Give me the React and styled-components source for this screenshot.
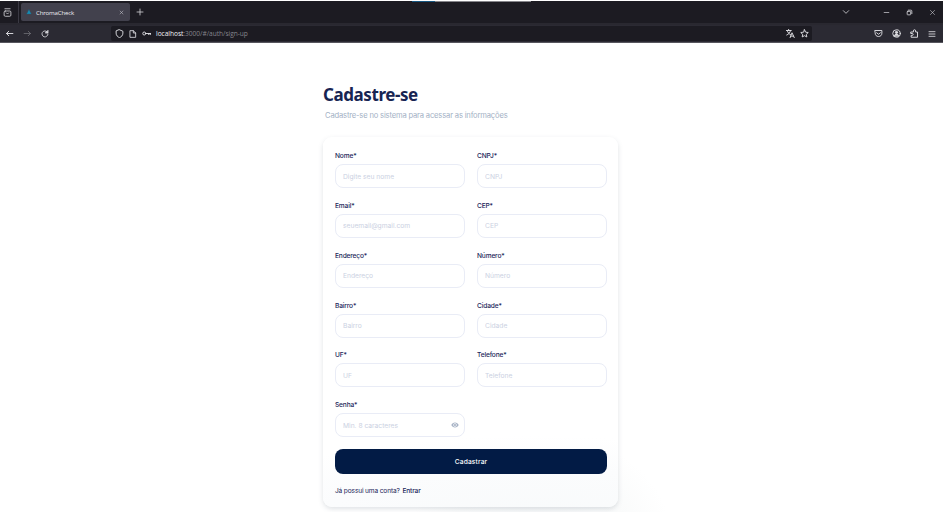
import React from "react";
import styled, { createGlobalStyle } from "styled-components";
import { MdRemoveRedEye } from "react-icons/md";

const Global = createGlobalStyle`
  * { box-sizing: border-box; }
  body { margin: 0; background: #fff; font-family: Inter, "Liberation Sans", sans-serif; overflow: hidden; }
  button, input { font-family: inherit; }
`;
const Window = styled.div`height: 515px; width: 943px; padding: 1px 0 3px; overflow: hidden; background: #fff; display: flex; flex-direction: column;`;
const TabBar = styled.div`height: 22px; flex: none; background: #1c1b22; display: flex; align-items: center; position: relative; color: #cfcfd4;`;
const Pinned = styled.div`width: 19px; height: 22px; padding-left: 3px; border-right: 1px solid #3a3943; display: flex; align-items: center;`;
const Tab = styled.div`width: 109px; height: 18px; margin-left: 2px; border-radius: 2px; background: #42414d; display: flex; align-items: center; padding: 0 6px 0 5px;`;
const TabTitle = styled.span`flex: 1; margin-left: 4px; font: 6.1px "Open Sans", sans-serif; letter-spacing: -0.16px; color: #ececf0;`;
const NewTab = styled.div`margin-left: 6px; display: flex;`;
const WindowControls = styled.div`margin-left: auto; display: flex; align-items: center; gap: 16px; padding-right: 7px;`;
const Buttons = styled.div`margin-left: 17px; display: flex; align-items: center; gap: 16px;`;
const LoadBar = styled.div`position: absolute; left: 412px; top: 0; width: 119px; height: 1px; background: linear-gradient(90deg, #175680 0 23px, #85858a 23px);`;
const Toolbar = styled.div`height: 20px; flex: none; background: #2b2a33; border-top: 2px solid #292830; border-bottom: 1px solid #57565e; display: flex; align-items: center; color: #dfdfe3;`;
const Navigation = styled.div`width: 111px; padding-left: 5px; display: flex; gap: 9px; align-items: center;`;
const Address = styled.div`width: 701px; height: 15px; padding: 0 3px 0 4px; border-radius: 2px; background: #1c1b22; display: flex; align-items: center; gap: 5px;`;
const Url = styled.span`flex: 1; font: 6.6px "Open Sans", sans-serif; letter-spacing: ${(p) => p.$spacing}px; color: #85858c; b { color: #f2f2f5; font-weight: 400; }`;
const Extensions = styled.div`margin-left: auto; padding-right: 7px; display: flex; gap: 9px; align-items: center;`;
const Glyph = styled.svg`width: ${(p) => p.$size || 10}px; height: ${(p) => p.$size || 10}px; flex: none; display: block; fill: none; stroke: currentColor; stroke-width: ${(p) => p.$weight || 1.5}; stroke-linecap: round; stroke-linejoin: round; opacity: ${(p) => p.$opacity || 1};`;

const Page = styled.main`flex: 1; min-height: 0; overflow: hidden; padding-left: 323px; background: radial-gradient(ellipse 130px 100px at 540px 490px, #f5f7f8 0%, #fafbfb 65%, #fff 100%) no-repeat;`;
const Heading = styled.h1`margin: 40px 0 0; height: 24px; font: 700 17px/24px "Noto Sans", "Open Sans", sans-serif; letter-spacing: ${(p) => p.$spacing}px; color: #172452; white-space: nowrap;`;
const Intro = styled.p`margin: 2px 0 0 2px; height: 12px; font-size: 7.6px; line-height: 13px; letter-spacing: ${(p) => p.$spacing}px; color: #a3b1c5; white-space: nowrap;`;
const Card = styled.form`width: 295px; height: 370px; margin-top: 16px; padding: 12px 12px 0; border-radius: 9px; background: radial-gradient(ellipse 330px 90px at 70% 105%, #f8fafb 0%, #fbfcfd 65%, #fff 100%); box-shadow: 0 2px 5px rgba(95, 110, 125, 0.2);`;
const Fields = styled.div`display: grid; grid-template-columns: 130px 130px; column-gap: 12px; grid-auto-rows: 49.85px;`;
const Field = styled.label`display: block;`;
const Label = styled.span`display: block; height: 15px; line-height: 15px; font-size: 6.6px; font-weight: 500; letter-spacing: ${(p) => p.$spacing}px; color: #1b2559; white-space: nowrap;`;
const InputBox = styled.span`display: flex; align-items: center; height: 24px; padding: 0 5px 0 7px; border: 1px solid #e9ecf6; border-radius: 8px; background: transparent; color: #a6b2c5;`;
const Input = styled.input`flex: 1; width: 0; padding: 1px 0 0; border: 0; outline: 0; background: transparent; font-size: 6.7px; letter-spacing: ${(p) => p.$spacing}px; &::placeholder { color: #cbd1e2; opacity: 1; }`;
const Submit = styled.button`display: block; width: 272px; height: 25px; margin-top: 0.9px; padding: 1px 0 0; border: 0; border-radius: 8px; background: #021b45; color: #fff; font-size: 6.7px; font-weight: 500; letter-spacing: 0.12px;`;
const Login = styled.p`margin: 12px 0 0; font-size: 6.6px; line-height: 11px; letter-spacing: ${(p) => p.$spacing}px; color: #1b2559; b { font-weight: 500; margin-left: 1px; }`;

const shapes = {
  archive: <><rect x="3" y="8" width="18" height="14" rx="3" /><path d="M5 2h14M9 13l3 3 3-3" /></>,
  close: <path d="M5 5l14 14M19 5L5 19" />,
  plus: <path d="M12 3v18M3 12h18" />,
  down: <path d="M4 8l8 8 8-8" />,
  minus: <path d="M4 12h16" />,
  restore: <><rect x="4" y="8" width="12" height="12" rx="2" /><path d="M8 4h9a3 3 0 013 3v9" /></>,
  back: <path d="M21 12H4M10 6l-6 6 6 6" />,
  forward: <path d="M3 12h17M14 6l6 6-6 6" />,
  reload: <><path d="M21 12a9 9 0 11-3-7" /><path d="M21 2v7h-7z" fill="currentColor" /></>,
  shield: <path d="M12 2l9 4v5c0 6-4 10-9 12-5-2-9-6-9-12V6z" />,
  page: <path d="M4 2h9l7 7v13H4zM13 2v7h7" />,
  key: <><circle cx="6" cy="12" r="4" /><path d="M10 12h13M18 12v3M22 12v3" /></>,
  translate: <path d="M1 4h13M7 1v3M3 4c2 6 5 9 9 11M12 4C11 10 7 14 2 16M11 23l5-13 6 13M13 19h7" />,
  star: <path d="M12 2l3 6.5 7 .9-5.2 4.8 1.4 7L12 17.8l-6.2 3.4 1.4-7L2 9.4l7-.9z" />,
  pocket: <><path d="M3 4h18v7c0 6-4 9-9 9s-9-3-9-9z" /><path d="M7 10l5 4 5-4" /></>,
  account: <><circle cx="12" cy="12" r="10" /><circle cx="12" cy="9" r="3" fill="currentColor" /><path d="M6 18c1-6 11-6 12 0z" fill="currentColor" /></>,
  puzzle: <path d="M3 8h6V5a3 3 0 016 0v3h5v14H3v-5h3a2 2 0 000-5H3z" />,
  menu: <path d="M3 5h18M3 12h18M3 19h18" />,
};
const Icon = ({ name, size, weight = 2, opacity }) => <Glyph viewBox="0 0 24 24" $size={size} $weight={weight} $opacity={opacity}>{shapes[name]}</Glyph>;

const fields = [
  ["Nome*", "Digite seu nome"], ["CNPJ*", "CNPJ"],
  ["Email*", "seuemail@gmail.com"], ["CEP*", "CEP"],
  ["Endereço*", "Endereço"], ["Número*", "Número"],
  ["Bairro*", "Bairro"], ["Cidade*", "Cidade"],
  ["UF*", "UF"], ["Telefone*", "Telefone"],
  ["Senha*", "Min. 8 caracteres"],
];

export default function App() {
  return <><Global /><Window>
    <TabBar>
      <LoadBar />
      <Pinned><Icon name="archive" size={9} weight={2.3} /></Pinned>
      <Tab>
        <Glyph viewBox="0 0 24 24" $size={6}><path d="M12 2l9 18H3z" fill="#168cb4" stroke="#235a78" /></Glyph>
        <TabTitle>ChromaCheck</TabTitle><Icon name="close" size={5} weight={2.5} />
      </Tab>
      <NewTab><Icon name="plus" size={8} weight={2.5} /></NewTab>
      <WindowControls>
        <Icon name="down" size={8} weight={2.5} />
        <Buttons><Icon name="minus" size={7} weight={2.5} /><Icon name="restore" size={7} weight={3} /><Icon name="close" size={7} weight={2} /></Buttons>
      </WindowControls>
    </TabBar>
    <Toolbar>
      <Navigation><Icon name="back" weight={2.5} size={9} /><Icon name="forward" opacity={0.4} size={9} /><Icon name="reload" weight={2.5} size={8} /></Navigation>
      <Address><Icon name="shield" size={9} weight={2.5} /><Icon name="page" size={8} weight={2.5} /><Icon name="key" size={9} weight={2.5} /><Url $spacing={-0.03}><b>localhost</b>:3000/#/auth/sign-up</Url><Icon name="translate" size={9} weight={2.5} /><Icon name="star" size={9} weight={2.5} /></Address>
      <Extensions><Icon name="pocket" size={9} weight={2.5} /><Icon name="account" size={9} weight={2.5} /><Icon name="puzzle" size={9} weight={2.5} /><Icon name="menu" size={8} weight={2.5} /></Extensions>
    </Toolbar>
    <Page>
      <Heading $spacing={-0.42}>Cadastre-se</Heading>
      <Intro $spacing={-0.17}>Cadastre-se no sistema para acessar as informações</Intro>
      <Card onSubmit={(event) => event.preventDefault()}>
        <Fields>{fields.map(([label, placeholder]) => <Field key={label}>
          <Label $spacing={-0.14}>{label}</Label>
          <InputBox><Input type={label === "Senha*" ? "password" : "text"} placeholder={placeholder} $spacing={0} />{label === "Senha*" && <MdRemoveRedEye size={8} />}</InputBox>
        </Field>)}</Fields>
        <Submit>Cadastrar</Submit>
        <Login $spacing={-0.15}>Já possui uma conta? <b>Entrar</b></Login>
      </Card>
    </Page>
  </Window></>;
}
